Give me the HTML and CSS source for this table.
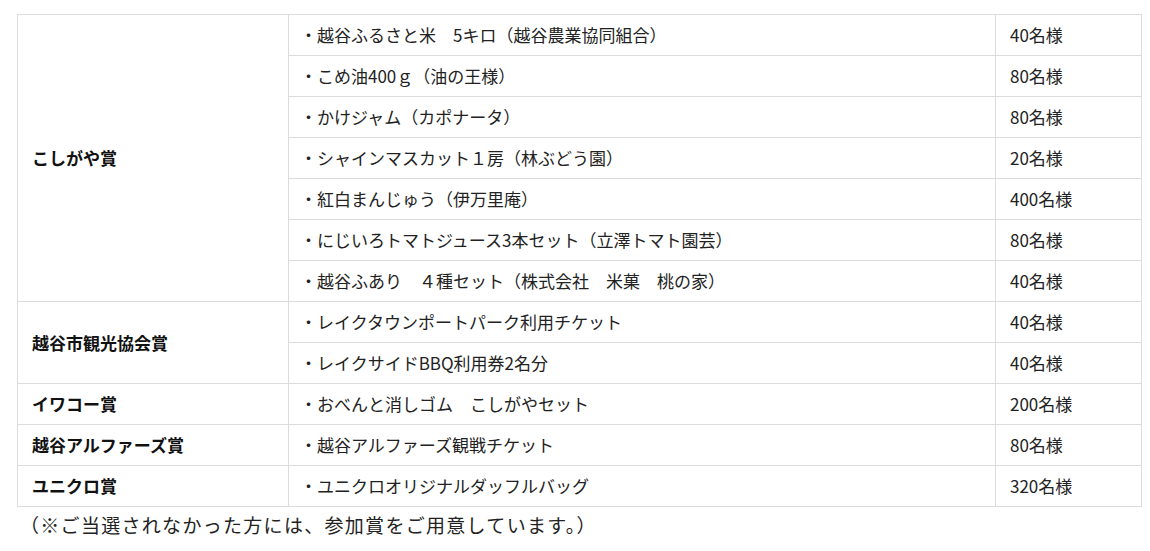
FILE: index.html
```html
<!DOCTYPE html>
<html lang="ja">
<head>
<meta charset="utf-8">
<link rel="stylesheet" href="styles.css">
</head>
<body>
<div class="wrap">
<table class="prize">
  <colgroup><col class="c1"><col class="c2"><col class="c3"></colgroup>
  <tbody>
    <tr><th rowspan="7">こしがや賞</th><td>・越谷ふるさと米　5キロ（越谷農業協同組合）</td><td>40名様</td></tr>
    <tr><td>・こめ油400ｇ（油の王様）</td><td>80名様</td></tr>
    <tr><td>・かけジャム（カポナータ）</td><td>80名様</td></tr>
    <tr><td>・シャインマスカット１房（林ぶどう園）</td><td>20名様</td></tr>
    <tr><td>・紅白まんじゅう（伊万里庵）</td><td>400名様</td></tr>
    <tr><td>・にじいろトマトジュース3本セット（立澤トマト園芸）</td><td>80名様</td></tr>
    <tr><td>・越谷ふあり　４種セット（株式会社　米菓　桃の家）</td><td>40名様</td></tr>
    <tr><th rowspan="2">越谷市観光協会賞</th><td>・レイクタウンポートパーク利用チケット</td><td>40名様</td></tr>
    <tr><td>・レイクサイドBBQ利用券2名分</td><td>40名様</td></tr>
    <tr><th>イワコー賞</th><td>・おべんと消しゴム　こしがやセット</td><td>200名様</td></tr>
    <tr><th>越谷アルファーズ賞</th><td>・越谷アルファーズ観戦チケット</td><td>80名様</td></tr>
    <tr><th>ユニクロ賞</th><td>・ユニクロオリジナルダッフルバッグ</td><td>320名様</td></tr>
  </tbody>
</table>
<p class="note">（※ご当選されなかった方には、参加賞をご用意しています。）</p>
</div>
</body>
</html>
```

FILE: styles.css
```css
html, body {
  margin: 0;
  padding: 0;
  background: #fff;
}
body {
  font-family: "Noto Sans CJK JP", "Noto Sans", sans-serif;
  color: #222;
}
.wrap {
  padding: 14px 9px 0 17px;
}
.prize {
  width: 1124px;
  border-collapse: collapse;
  table-layout: fixed;
  font-size: 17px;
}
.prize .c1 { width: 271px; }
.prize .c2 { width: 707px; }
.prize .c3 { width: 146px; }
.prize th, .prize td {
  border: 1px solid #dcdcdc;
  height: 40px;
  padding: 0 14px;
  text-align: left;
  vertical-align: middle;
  line-height: 20px;
  white-space: nowrap;
}
.prize th {
  font-weight: bold;
  color: #111;
}
.prize td:nth-last-child(2) {
  padding-left: 11px;
}
.note {
  margin: 5px 0 0 3px;
  font-size: 19px;
  line-height: 26px;
  letter-spacing: 1.3px;
  color: #222;
}
```
